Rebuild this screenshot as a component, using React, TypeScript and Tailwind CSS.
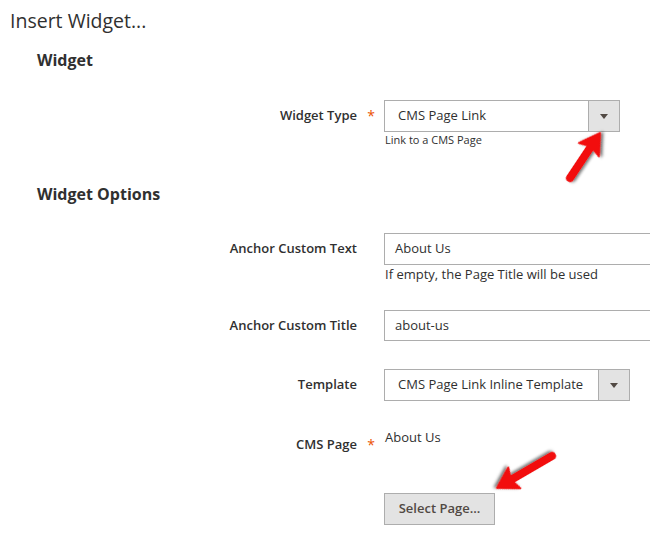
import React from "react";

const font = { fontFamily: '"Open Sans", "Liberation Sans", sans-serif' };

const Caret = () => (
  <span className="block w-0 h-0 border-l-[4px] border-r-[4px] border-t-[5px] border-l-transparent border-r-transparent border-t-[#514943]" />
);

const Label = ({ text, required }: { text: string; required?: boolean }) => (
  <div className="flex items-center shrink-0">
    <div className="w-[357px] text-right text-[13px] font-semibold text-[#303030]">{text}</div>
    <div className="w-[27px] text-center text-[#eb5202] text-[14px] leading-none pl-[1px]">
      {required ? "*" : ""}
    </div>
  </div>
);

const Select = ({ value, width }: { value: string; width: string }) => (
  <div className={`flex h-[32px] border border-[#adadad] bg-white ${width}`}>
    <div className="flex-1 flex items-center pl-[13px] text-[13px] text-[#303030] whitespace-nowrap">{value}</div>
    <div className="w-[31px] flex items-center justify-center bg-[#e3e3e3] border-l border-[#adadad]">
      <Caret />
    </div>
  </div>
);

const Arrow = ({ className, x1, y1, x2, y2 }: { className: string; x1: number; y1: number; x2: number; y2: number }) => {
  const ang = Math.atan2(y2 - y1, x2 - x1);
  const len = Math.hypot(x2 - x1, y2 - y1);
  const deg = (ang * 180) / Math.PI;
  return (
    <svg className={className} width="100" height="100" viewBox="0 0 100 100">
      <defs>
        <filter id="sh" x="-30%" y="-30%" width="160%" height="160%">
          <feDropShadow dx="1.5" dy="2" stdDeviation="1.5" floodColor="#000" floodOpacity="0.55" />
        </filter>
      </defs>
      <g transform={`translate(${x1} ${y1}) rotate(${deg})`} filter="url(#sh)">
        <line x1="0" y1="0" x2={len - 14} y2="0" stroke="#f20c0c" strokeWidth="8" strokeLinecap="round" />
        <path d={`M ${len} 0 L ${len - 20} -12 L ${len - 16} 0 L ${len - 20} 12 Z`} fill="#f20c0c" stroke="#f20c0c" strokeWidth="2" strokeLinejoin="round" />
      </g>
    </svg>
  );
};

export default function App() {
  return (
    <div className="relative w-[650px] h-[541px] overflow-hidden bg-white" style={font}>
      <h1 className="pl-[10px] pt-[6px] text-[19.5px] leading-[30px] text-[#303030]">Insert Widget...</h1>
      <h2 className="pl-[37px] mt-[12px] text-[16px] font-bold leading-[24px] text-[#303030]">Widget</h2>

      <div className="mt-[28px] flex items-center">
        <Label text="Widget Type" required />
        <Select value="CMS Page Link" width="w-[236px]" />
      </div>
      <div className="pl-[385px] text-[11px] leading-[16px] text-[#303030]">Link to a CMS Page</div>

      <h2 className="pl-[37px] mt-[34px] text-[16px] font-bold leading-[24px] text-[#303030]">Widget Options</h2>

      <div className="mt-[27px] flex items-center">
        <Label text="Anchor Custom Text" />
        <div className="flex-1 h-[32px] border border-[#adadad] flex items-center pl-[10px] text-[13px] text-[#303030] mr-[-10px]">About Us</div>
      </div>
      <div className="pl-[385px] text-[13px] leading-[18px] text-[#303030]">If empty, the Page Title will be used</div>

      <div className="mt-[27px] flex items-center">
        <Label text="Anchor Custom Title" />
        <div className="flex-1 h-[31px] border border-[#adadad] flex items-center pl-[10px] text-[13px] text-[#303030] mr-[-10px]">about-us</div>
      </div>

      <div className="mt-[28px] flex items-center">
        <Label text="Template" />
        <Select value="CMS Page Link Inline Template" width="w-[246px]" />
      </div>

      <div className="mt-[26px] flex items-start">
        <div className="pt-[8px]"><Label text="CMS Page" required /></div>
        <div className="flex flex-col items-start">
          <div className="pl-[1px] text-[13px] leading-[20px] text-[#303030]">About Us</div>
          <button className="mt-[46px] h-[32px] w-[111px] border border-[#adadad] bg-[#e3e3e3] text-[13px] font-semibold text-[#514943]">
            Select Page...
          </button>
        </div>
      </div>

      <Arrow className="absolute left-[555px] top-[120px]" x1={15} y1={58} x2={45} y2={13} />
      <Arrow className="absolute left-[480px] top-[440px]" x1={72} y1={16} x2={17} y2={48} />
    </div>
  );
}
